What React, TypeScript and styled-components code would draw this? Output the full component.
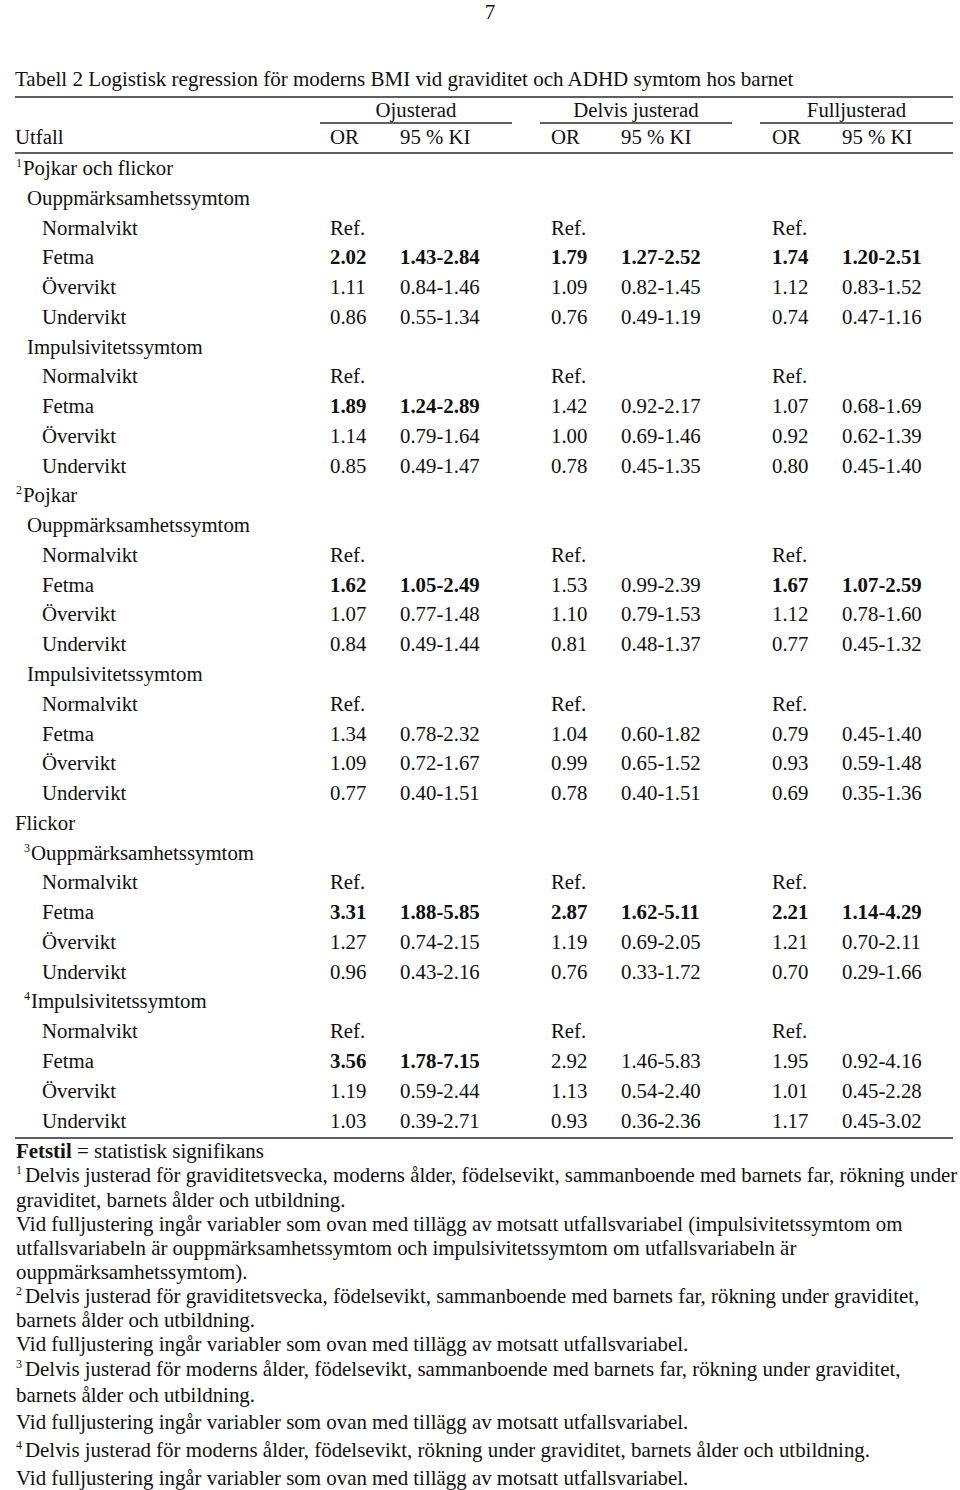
import React from "react";
import styled, { createGlobalStyle } from "styled-components";

const Global = createGlobalStyle`
  html, body { margin: 0; padding: 0; background: #fff; }
  body { font-family: "Liberation Serif", "Times New Roman", serif; color: #111; }
`;

const Page = styled.div`
  width: 960px;
  height: 1490px;
  box-sizing: border-box;
  padding: 0 7px 0 15px;
  overflow: hidden;
`;

const PageNum = styled.div`
  text-align: center;
  font-size: 21px;
  line-height: 24px;
  padding: 0 0 0 12px;
  height: 66px;
`;

const Title = styled.div`
  font-size: 21px;
  line-height: 26px;
  height: 30px;
  white-space: nowrap;
`;

const Rule = styled.div<{ $mt?: number }>`
  height: 2px;
  background: #5f5f5f;
  margin-top: ${(p) => p.$mt ?? 0}px;
`;

const GroupRow = styled.div`
  display: grid;
  grid-template-columns: 305px 192px 28px 192px 28px 193px;
  font-size: 20.8px;
  height: 26px;
`;

const GroupCell = styled.div`
  text-align: center;
  line-height: 24px;
  border-bottom: 2px solid #5f5f5f;
  white-space: nowrap;
`;

const Cols = styled.div`
  display: grid;
  grid-template-columns: 315px 70px 151px 70px 151px 70px 111px;
  font-size: 20.8px;
`;

const HeadRow = styled(Cols)`
  height: 28px;
  line-height: 25px;
`;

const Row = styled(Cols)`
  height: 29.78px;
  line-height: 25px;
`;

const Label = styled.div<{ $indent: number }>`
  padding-left: ${(p) => p.$indent}px;
  white-space: nowrap;
`;

const Sup = styled.sup`
  font-size: 12px;
  vertical-align: 8px;
  line-height: 0;
  margin-right: 1px;
`;

const Cell = styled.div<{ $bold?: boolean }>`
  font-weight: ${(p) => (p.$bold ? 700 : 400)};
  white-space: nowrap;
`;

const Body = styled.div`
  padding-top: 1px;
`;

const Notes = styled.div`
  font-size: 20.9px;
  padding-left: 1px;
`;

const NoteLine = styled.div<{ $h: number }>`
  height: ${(p) => p.$h}px;
  line-height: ${(p) => p.$h}px;
  white-space: nowrap;
`;

const NoteSup = styled.sup`
  font-size: 12px;
  vertical-align: 8px;
  line-height: 0;
  margin-right: 3px;
`;

type V = [string, string, boolean?];
type DataRow = {
  label: string;
  indent: number;
  sup?: string;
  vals?: V[];
};

const ref: V[] = [["Ref.", ""], ["Ref.", ""], ["Ref.", ""]];

const rows: DataRow[] = [
  { label: "Pojkar och flickor", indent: 1, sup: "1" },
  { label: "Ouppmärksamhetssymtom", indent: 12 },
  { label: "Normalvikt", indent: 27, vals: ref },
  { label: "Fetma", indent: 27, vals: [["2.02", "1.43-2.84", true], ["1.79", "1.27-2.52", true], ["1.74", "1.20-2.51", true]] },
  { label: "Övervikt", indent: 27, vals: [["1.11", "0.84-1.46"], ["1.09", "0.82-1.45"], ["1.12", "0.83-1.52"]] },
  { label: "Undervikt", indent: 27, vals: [["0.86", "0.55-1.34"], ["0.76", "0.49-1.19"], ["0.74", "0.47-1.16"]] },
  { label: "Impulsivitetssymtom", indent: 12 },
  { label: "Normalvikt", indent: 27, vals: ref },
  { label: "Fetma", indent: 27, vals: [["1.89", "1.24-2.89", true], ["1.42", "0.92-2.17"], ["1.07", "0.68-1.69"]] },
  { label: "Övervikt", indent: 27, vals: [["1.14", "0.79-1.64"], ["1.00", "0.69-1.46"], ["0.92", "0.62-1.39"]] },
  { label: "Undervikt", indent: 27, vals: [["0.85", "0.49-1.47"], ["0.78", "0.45-1.35"], ["0.80", "0.45-1.40"]] },
  { label: "Pojkar", indent: 1, sup: "2" },
  { label: "Ouppmärksamhetssymtom", indent: 12 },
  { label: "Normalvikt", indent: 27, vals: ref },
  { label: "Fetma", indent: 27, vals: [["1.62", "1.05-2.49", true], ["1.53", "0.99-2.39"], ["1.67", "1.07-2.59", true]] },
  { label: "Övervikt", indent: 27, vals: [["1.07", "0.77-1.48"], ["1.10", "0.79-1.53"], ["1.12", "0.78-1.60"]] },
  { label: "Undervikt", indent: 27, vals: [["0.84", "0.49-1.44"], ["0.81", "0.48-1.37"], ["0.77", "0.45-1.32"]] },
  { label: "Impulsivitetssymtom", indent: 12 },
  { label: "Normalvikt", indent: 27, vals: ref },
  { label: "Fetma", indent: 27, vals: [["1.34", "0.78-2.32"], ["1.04", "0.60-1.82"], ["0.79", "0.45-1.40"]] },
  { label: "Övervikt", indent: 27, vals: [["1.09", "0.72-1.67"], ["0.99", "0.65-1.52"], ["0.93", "0.59-1.48"]] },
  { label: "Undervikt", indent: 27, vals: [["0.77", "0.40-1.51"], ["0.78", "0.40-1.51"], ["0.69", "0.35-1.36"]] },
  { label: "Flickor", indent: 0 },
  { label: "Ouppmärksamhetssymtom", indent: 9, sup: "3" },
  { label: "Normalvikt", indent: 27, vals: ref },
  { label: "Fetma", indent: 27, vals: [["3.31", "1.88-5.85", true], ["2.87", "1.62-5.11", true], ["2.21", "1.14-4.29", true]] },
  { label: "Övervikt", indent: 27, vals: [["1.27", "0.74-2.15"], ["1.19", "0.69-2.05"], ["1.21", "0.70-2.11"]] },
  { label: "Undervikt", indent: 27, vals: [["0.96", "0.43-2.16"], ["0.76", "0.33-1.72"], ["0.70", "0.29-1.66"]] },
  { label: "Impulsivitetssymtom", indent: 9, sup: "4" },
  { label: "Normalvikt", indent: 27, vals: ref },
  { label: "Fetma", indent: 27, vals: [["3.56", "1.78-7.15", true], ["2.92", "1.46-5.83"], ["1.95", "0.92-4.16"]] },
  { label: "Övervikt", indent: 27, vals: [["1.19", "0.59-2.44"], ["1.13", "0.54-2.40"], ["1.01", "0.45-2.28"]] },
  { label: "Undervikt", indent: 27, vals: [["1.03", "0.39-2.71"], ["0.93", "0.36-2.36"], ["1.17", "0.45-3.02"]] },
];

type Note = { h: number; sup?: string; content: React.ReactNode };

const notes: Note[] = [
  { h: 24, content: <><b>Fetstil</b> = statistisk signifikans</> },
  { h: 24.5, sup: "1", content: "Delvis justerad för graviditetsvecka, moderns ålder, födelsevikt, sammanboende med barnets far, rökning under" },
  { h: 24, content: "graviditet, barnets ålder och utbildning." },
  { h: 24, content: "Vid fulljustering ingår variabler som ovan med tillägg av motsatt utfallsvariabel (impulsivitetssymtom om" },
  { h: 24.5, content: "utfallsvariabeln är ouppmärksamhetssymtom och impulsivitetssymtom om utfallsvariabeln är" },
  { h: 24, content: "ouppmärksamhetssymtom)." },
  { h: 24, sup: "2", content: "Delvis justerad för graviditetsvecka, födelsevikt, sammanboende med barnets far, rökning under graviditet," },
  { h: 24, content: "barnets ålder och utbildning." },
  { h: 24, content: "Vid fulljustering ingår variabler som ovan med tillägg av motsatt utfallsvariabel." },
  { h: 26, sup: "3", content: "Delvis justerad för moderns ålder, födelsevikt, sammanboende med barnets far, rökning under graviditet," },
  { h: 27, content: "barnets ålder och utbildning." },
  { h: 27, content: "Vid fulljustering ingår variabler som ovan med tillägg av motsatt utfallsvariabel." },
  { h: 28, sup: "4", content: "Delvis justerad för moderns ålder, födelsevikt, rökning under graviditet, barnets ålder och utbildning." },
  { h: 28, content: "Vid fulljustering ingår variabler som ovan med tillägg av motsatt utfallsvariabel." },
];

export default function App() {
  return (
    <>
      <Global />
      <Page>
        <PageNum>7</PageNum>
        <Title>Tabell 2 Logistisk regression för moderns BMI vid graviditet och ADHD symtom hos barnet</Title>
        <Rule />
        <GroupRow>
          <div />
          <GroupCell>Ojusterad</GroupCell>
          <div />
          <GroupCell>Delvis justerad</GroupCell>
          <div />
          <GroupCell>Fulljusterad</GroupCell>
        </GroupRow>
        <HeadRow>
          <Label $indent={0}>Utfall</Label>
          <Cell>OR</Cell>
          <Cell>95 % KI</Cell>
          <Cell>OR</Cell>
          <Cell>95 % KI</Cell>
          <Cell>OR</Cell>
          <Cell>95 % KI</Cell>
        </HeadRow>
        <Rule />
        <Body>
          {rows.map((r, i) => (
            <Row key={i}>
              <Label $indent={r.indent}>
                {r.sup && <Sup>{r.sup}</Sup>}
                {r.label}
              </Label>
              {(r.vals ?? [["", ""], ["", ""], ["", ""]]).map((v, j) => (
                <React.Fragment key={j}>
                  <Cell $bold={v[2]}>{v[0]}</Cell>
                  <Cell $bold={v[2]}>{v[1]}</Cell>
                </React.Fragment>
              ))}
            </Row>
          ))}
        </Body>
        <Rule />
        <Notes>
          {notes.map((n, i) => (
            <NoteLine key={i} $h={n.h}>
              {n.sup && <NoteSup>{n.sup}</NoteSup>}
              {n.content}
            </NoteLine>
          ))}
        </Notes>
      </Page>
    </>
  );
}
